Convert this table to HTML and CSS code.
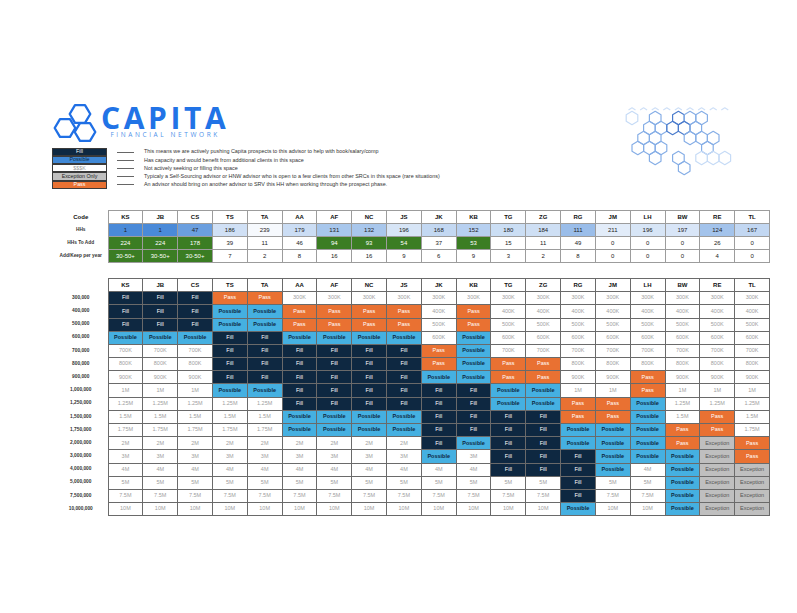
FILE: index.html
```html
<!DOCTYPE html>
<html lang="en">
<head>
<meta charset="utf-8">
<title>Capita Financial Network – Advisor Matrix</title>
<link rel="stylesheet" href="styles.css">
</head>
<body>
<div class="page">
  <div class="top">
    <div class="left">
      <div class="logo">
        <svg class="logo-mark" viewBox="0 0 44 40" aria-hidden="true">
          <g fill="none" stroke="#1f6fe5" stroke-width="2.3" stroke-linejoin="round">
            <polygon points="16.7,11 22,2.1 32,2.1 37.3,11 32,19.9 22,19.9"/>
            <polygon points="1.7,25 7,16.1 17,16.1 22.3,25 17,33.9 7,33.9"/>
            <polygon points="21.7,29 27,20.1 37,20.1 42.3,29 37,37.9 27,37.9"/>
          </g>
        </svg>
        <div class="wordmark">
          <div class="capita">CAPITA</div>
          <div class="fin">FINANCIAL NETWORK</div>
        </div>
      </div>
      <div class="legend">
        <div class="lg-row"><span class="lg-box lg-fill">Fill</span><span class="dash"></span><span class="lg-text">This means we are actively pushing Capita prospects to this advisor to help with book/salary/comp</span></div>
        <div class="lg-row"><span class="lg-box lg-possible">Possible</span><span class="dash"></span><span class="lg-text">Has capacity and would benefit from additional clients in this space</span></div>
        <div class="lg-row"><span class="lg-box lg-k">$$$K</span><span class="dash"></span><span class="lg-text">Not actively seeking or filling this space</span></div>
        <div class="lg-row"><span class="lg-box lg-exc">Exception Only</span><span class="dash"></span><span class="lg-text">Typicaly a Self-Sourcing advisor or HNW advisor who is open to a few clients from other SRCs in this space (rare situations)</span></div>
        <div class="lg-row"><span class="lg-box lg-pass">Pass</span><span class="dash"></span><span class="lg-text">An advisor should bring on another advisor to SRV this HH when working through the prospect phase.</span></div>
      </div>
    </div>
    <svg class="honeycomb" viewBox="0 0 125 80" aria-hidden="true">
      <defs>
        <polygon id="hx" points="0,-6.7 5.8,-3.35 5.8,3.35 0,6.7 -5.8,3.35 -5.8,-3.35"/>
      </defs>
      <g class="peaks">
        <polyline points="12.5,9 16,6.8 19.5,9"/>
        <polyline points="24.1,9 27.6,6.8 31.1,9"/>
        <polyline points="35.7,9 39.2,6.8 42.7,9"/>
        <polyline points="47.3,9 50.8,6.8 54.3,9"/>
        <polyline points="58.9,9 62.4,6.8 65.9,9"/>
        <polyline points="70.5,9 74,6.8 77.5,9"/>
        <polyline points="82.1,9 85.6,6.8 89.1,9"/>
        <polyline points="93.7,9 97.2,6.8 100.7,9"/>
        <polyline points="105.3,9 108.8,6.8 112.3,9"/>
      </g>
      <use href="#hx" x="16" y="17" class="hl"/>
      <use href="#hx" x="39.2" y="17" class="hm"/>
      <use href="#hx" x="62.4" y="17" class="hd"/>
      <use href="#hx" x="74" y="17" class="hm"/>
      <use href="#hx" x="85.6" y="17" class="hm"/>
      <use href="#hx" x="33.4" y="27" class="hm"/>
      <use href="#hx" x="45" y="27" class="hm"/>
      <use href="#hx" x="56.6" y="27" class="hd"/>
      <use href="#hx" x="68.2" y="27" class="hd"/>
      <use href="#hx" x="79.8" y="27" class="hm"/>
      <use href="#hx" x="27.6" y="37" class="hm"/>
      <use href="#hx" x="39.2" y="37" class="hm"/>
      <use href="#hx" x="74" y="37" class="hm"/>
      <use href="#hx" x="85.6" y="37" class="hm"/>
      <use href="#hx" x="97.2" y="37" class="hm"/>
      <use href="#hx" x="21.8" y="47" class="hm"/>
      <use href="#hx" x="33.4" y="47" class="hm"/>
      <use href="#hx" x="45" y="47" class="hm"/>
      <use href="#hx" x="91.4" y="47" class="hm"/>
      <use href="#hx" x="39.2" y="57" class="hm"/>
      <use href="#hx" x="62.4" y="57" class="hm"/>
      <use href="#hx" x="85.6" y="57" class="hl"/>
      <use href="#hx" x="97.2" y="57" class="hl"/>
      <use href="#hx" x="108.8" y="57" class="hl"/>
      <use href="#hx" x="68.2" y="67" class="hm"/>
    </svg>
  </div>

  <table class="sheet summary">
    <colgroup><col class="lab"><col span="19"></colgroup>
    <tr class="head"><th class="lab">Code</th><th>KS</th><th>JB</th><th>CS</th><th>TS</th><th>TA</th><th>AA</th><th>AF</th><th>NC</th><th>JS</th><th>JK</th><th>KB</th><th>TG</th><th>ZG</th><th>RG</th><th>JM</th><th>LH</th><th>BW</th><th>RE</th><th>TL</th></tr>
    <tr><th class="lab">HHs</th>
      <td style="background:#4a8ad8">1</td><td style="background:#4a8ad8">1</td><td style="background:#6b9fdf">47</td><td style="background:#d0e0f5">186</td><td style="background:#f6f9fd">239</td><td style="background:#cbddf4">179</td><td style="background:#a8c7ec">131</td><td style="background:#a9c7ec">132</td><td style="background:#d7e5f6">196</td><td style="background:#c3d8f2">168</td><td style="background:#b7d0f0">152</td><td style="background:#cbdef4">180</td><td style="background:#cedff4">184</td><td style="background:#9abde9">111</td><td style="background:#e2ecf9">211</td><td style="background:#d7e5f6">196</td><td style="background:#d8e5f7">197</td><td style="background:#a3c3eb">124</td><td style="background:#c2d7f2">167</td></tr>
    <tr><th class="lab">HHs To Add</th>
      <td class="g">224</td><td class="g">224</td><td class="g">178</td><td>39</td><td>11</td><td>46</td><td class="g">94</td><td class="g">93</td><td class="g">54</td><td>37</td><td class="g">53</td><td>15</td><td>11</td><td>49</td><td>0</td><td>0</td><td>0</td><td>26</td><td>0</td></tr>
    <tr><th class="lab">Add/Keep per year</th>
      <td class="g">30-50+</td><td class="g">30-50+</td><td class="g">30-50+</td><td>7</td><td>2</td><td>8</td><td>16</td><td>16</td><td>9</td><td>6</td><td>9</td><td>3</td><td>2</td><td>8</td><td>0</td><td>0</td><td>0</td><td>4</td><td>0</td></tr>
  </table>

  <table class="sheet matrix">
    <colgroup><col class="lab"><col span="19"></colgroup>
    <tr class="head"><th class="lab"></th><th>KS</th><th>JB</th><th>CS</th><th>TS</th><th>TA</th><th>AA</th><th>AF</th><th>NC</th><th>JS</th><th>JK</th><th>KB</th><th>TG</th><th>ZG</th><th>RG</th><th>JM</th><th>LH</th><th>BW</th><th>RE</th><th>TL</th></tr>
    <tr><th class="lab">300,000</th><td class="f">Fill</td><td class="f">Fill</td><td class="f">Fill</td><td class="x">Pass</td><td class="x">Pass</td><td>300K</td><td>300K</td><td>300K</td><td>300K</td><td>300K</td><td>300K</td><td>300K</td><td>300K</td><td>300K</td><td>300K</td><td>300K</td><td>300K</td><td>300K</td><td>300K</td></tr>
    <tr><th class="lab">400,000</th><td class="f">Fill</td><td class="f">Fill</td><td class="f">Fill</td><td class="p">Possible</td><td class="p">Possible</td><td class="x">Pass</td><td class="x">Pass</td><td class="x">Pass</td><td class="x">Pass</td><td>400K</td><td class="x">Pass</td><td>400K</td><td>400K</td><td>400K</td><td>400K</td><td>400K</td><td>400K</td><td>400K</td><td>400K</td></tr>
    <tr><th class="lab">500,000</th><td class="f">Fill</td><td class="f">Fill</td><td class="f">Fill</td><td class="p">Possible</td><td class="p">Possible</td><td class="x">Pass</td><td class="x">Pass</td><td class="x">Pass</td><td class="x">Pass</td><td>500K</td><td class="x">Pass</td><td>500K</td><td>500K</td><td>500K</td><td>500K</td><td>500K</td><td>500K</td><td>500K</td><td>500K</td></tr>
    <tr><th class="lab">600,000</th><td class="p">Possible</td><td class="p">Possible</td><td class="p">Possible</td><td class="f">Fill</td><td class="f">Fill</td><td class="p">Possible</td><td class="p">Possible</td><td class="p">Possible</td><td class="p">Possible</td><td>600K</td><td class="p">Possible</td><td>600K</td><td>600K</td><td>600K</td><td>600K</td><td>600K</td><td>600K</td><td>600K</td><td>600K</td></tr>
    <tr><th class="lab">700,000</th><td>700K</td><td>700K</td><td>700K</td><td class="f">Fill</td><td class="f">Fill</td><td class="f">Fill</td><td class="f">Fill</td><td class="f">Fill</td><td class="f">Fill</td><td class="x">Pass</td><td class="p">Possible</td><td>700K</td><td>700K</td><td>700K</td><td>700K</td><td>700K</td><td>700K</td><td>700K</td><td>700K</td></tr>
    <tr><th class="lab">800,000</th><td>800K</td><td>800K</td><td>800K</td><td class="f">Fill</td><td class="f">Fill</td><td class="f">Fill</td><td class="f">Fill</td><td class="f">Fill</td><td class="f">Fill</td><td class="x">Pass</td><td class="p">Possible</td><td class="x">Pass</td><td class="x">Pass</td><td>800K</td><td>800K</td><td>800K</td><td>800K</td><td>800K</td><td>800K</td></tr>
    <tr><th class="lab">900,000</th><td>900K</td><td>900K</td><td>900K</td><td class="f">Fill</td><td class="f">Fill</td><td class="f">Fill</td><td class="f">Fill</td><td class="f">Fill</td><td class="f">Fill</td><td class="p">Possible</td><td class="p">Possible</td><td class="x">Pass</td><td class="x">Pass</td><td>900K</td><td>900K</td><td class="x">Pass</td><td>900K</td><td>900K</td><td>900K</td></tr>
    <tr><th class="lab">1,000,000</th><td>1M</td><td>1M</td><td>1M</td><td class="p">Possible</td><td class="p">Possible</td><td class="f">Fill</td><td class="f">Fill</td><td class="f">Fill</td><td class="f">Fill</td><td class="f">Fill</td><td class="f">Fill</td><td class="p">Possible</td><td class="p">Possible</td><td>1M</td><td>1M</td><td class="x">Pass</td><td>1M</td><td>1M</td><td>1M</td></tr>
    <tr><th class="lab">1,250,000</th><td>1.25M</td><td>1.25M</td><td>1.25M</td><td>1.25M</td><td>1.25M</td><td class="f">Fill</td><td class="f">Fill</td><td class="f">Fill</td><td class="f">Fill</td><td class="f">Fill</td><td class="f">Fill</td><td class="p">Possible</td><td class="p">Possible</td><td class="x">Pass</td><td class="x">Pass</td><td class="p">Possible</td><td>1.25M</td><td>1.25M</td><td>1.25M</td></tr>
    <tr><th class="lab">1,500,000</th><td>1.5M</td><td>1.5M</td><td>1.5M</td><td>1.5M</td><td>1.5M</td><td class="p">Possible</td><td class="p">Possible</td><td class="p">Possible</td><td class="p">Possible</td><td class="f">Fill</td><td class="f">Fill</td><td class="f">Fill</td><td class="f">Fill</td><td class="x">Pass</td><td class="x">Pass</td><td class="p">Possible</td><td>1.5M</td><td class="x">Pass</td><td>1.5M</td></tr>
    <tr><th class="lab">1,750,000</th><td>1.75M</td><td>1.75M</td><td>1.75M</td><td>1.75M</td><td>1.75M</td><td class="p">Possible</td><td class="p">Possible</td><td class="p">Possible</td><td class="p">Possible</td><td class="f">Fill</td><td class="f">Fill</td><td class="f">Fill</td><td class="f">Fill</td><td class="p">Possible</td><td class="p">Possible</td><td class="p">Possible</td><td class="x">Pass</td><td class="x">Pass</td><td>1.75M</td></tr>
    <tr><th class="lab">2,000,000</th><td>2M</td><td>2M</td><td>2M</td><td>2M</td><td>2M</td><td>2M</td><td>2M</td><td>2M</td><td>2M</td><td class="f">Fill</td><td class="p">Possible</td><td class="f">Fill</td><td class="f">Fill</td><td class="p">Possible</td><td class="p">Possible</td><td class="p">Possible</td><td class="x">Pass</td><td class="e">Exception</td><td class="x">Pass</td></tr>
    <tr><th class="lab">3,000,000</th><td>3M</td><td>3M</td><td>3M</td><td>3M</td><td>3M</td><td>3M</td><td>3M</td><td>3M</td><td>3M</td><td class="p">Possible</td><td>3M</td><td class="f">Fill</td><td class="f">Fill</td><td class="f">Fill</td><td class="p">Possible</td><td class="p">Possible</td><td class="p">Possible</td><td class="e">Exception</td><td class="x">Pass</td></tr>
    <tr><th class="lab">4,000,000</th><td>4M</td><td>4M</td><td>4M</td><td>4M</td><td>4M</td><td>4M</td><td>4M</td><td>4M</td><td>4M</td><td>4M</td><td>4M</td><td class="f">Fill</td><td class="f">Fill</td><td class="f">Fill</td><td class="p">Possible</td><td>4M</td><td class="p">Possible</td><td class="e">Exception</td><td class="e">Exception</td></tr>
    <tr><th class="lab">5,000,000</th><td>5M</td><td>5M</td><td>5M</td><td>5M</td><td>5M</td><td>5M</td><td>5M</td><td>5M</td><td>5M</td><td>5M</td><td>5M</td><td>5M</td><td>5M</td><td class="f">Fill</td><td>5M</td><td>5M</td><td class="p">Possible</td><td class="e">Exception</td><td class="e">Exception</td></tr>
    <tr><th class="lab">7,500,000</th><td>7.5M</td><td>7.5M</td><td>7.5M</td><td>7.5M</td><td>7.5M</td><td>7.5M</td><td>7.5M</td><td>7.5M</td><td>7.5M</td><td>7.5M</td><td>7.5M</td><td>7.5M</td><td>7.5M</td><td class="f">Fill</td><td>7.5M</td><td>7.5M</td><td class="p">Possible</td><td class="e">Exception</td><td class="e">Exception</td></tr>
    <tr><th class="lab">10,000,000</th><td>10M</td><td>10M</td><td>10M</td><td>10M</td><td>10M</td><td>10M</td><td>10M</td><td>10M</td><td>10M</td><td>10M</td><td>10M</td><td>10M</td><td>10M</td><td class="p">Possible</td><td>10M</td><td>10M</td><td class="p">Possible</td><td class="e">Exception</td><td class="e">Exception</td></tr>
  </table>
</div>
</body>
</html>
```

FILE: styles.css
```css
* { box-sizing: border-box; }

body {
  margin: 0;
  background: #ffffff;
  font-family: "Liberation Sans", Arial, sans-serif;
  color: #222222;
}

.page {
  padding-top: 103px;
  padding-bottom: 40px;
}

/* ---------- header ---------- */
.top {
  display: flex;
  justify-content: space-between;
  align-items: flex-start;
  padding-right: 56px;
}

.left {
  padding-left: 52px;
}

.logo {
  display: flex;
  align-items: flex-start;
  gap: 4px;
  margin-left: 1px;
}

.logo-mark {
  width: 44px;
  height: 40px;
  display: block;
}

.wordmark {
  display: flex;
  flex-direction: column;
  align-items: center;
  padding-top: 2px;
}

.capita {
  font-family: "Open Sans", "Liberation Sans", sans-serif;
  font-weight: 700;
  font-size: 30px;
  line-height: 26px;
  letter-spacing: 3.6px;
  color: #2173e6;
}

.fin {
  font-family: "Open Sans", "Liberation Sans", sans-serif;
  font-size: 6.5px;
  line-height: 8px;
  letter-spacing: 2.6px;
  color: #5193ea;
}

.honeycomb {
  width: 125px;
  height: 80px;
  display: block;
  margin-top: -2px;
}

.honeycomb use,
.honeycomb polyline {
  fill: none;
  stroke-width: 1.2;
  stroke-linejoin: round;
}

.honeycomb .hd { stroke: #4a7bcc; }
.honeycomb .hm { stroke: #86aee6; }
.honeycomb .hl { stroke: #c6dbf6; }
.honeycomb .peaks polyline { stroke: #cfe0f7; }

/* ---------- legend ---------- */
.legend {
  margin-top: 5px;
  display: flex;
  flex-direction: column;
}

.lg-row {
  display: flex;
  align-items: center;
  height: 8.2px;
}

.lg-box {
  width: 55px;
  height: 100%;
  border: 1px solid #3a3a3a;
  margin-top: -0.5px;
  display: flex;
  align-items: center;
  justify-content: center;
  font-size: 5.3px;
  line-height: 1;
}

.lg-fill { background: #0e2841; color: #ffffff; }
.lg-possible { background: #3f88d6; color: #0e2841; }
.lg-k { background: #ffffff; color: #a0a0a0; }
.lg-exc { background: #c0c0c0; color: #222222; }
.lg-pass { background: #e97132; color: #ffffff; }

.dash {
  width: 17px;
  border-top: 0.8px solid #666666;
  margin: 0 10px;
}

.lg-text {
  font-size: 5.4px;
  line-height: 1;
  color: #333333;
  white-space: nowrap;
}

/* ---------- sheets ---------- */
.sheet {
  border-collapse: collapse;
  table-layout: fixed;
  width: 716px;
  margin-left: 54px;
}

.sheet col.lab { width: 54px; }

.sheet td,
.sheet th {
  padding: 0;
  height: 13px;
  text-align: center;
  vertical-align: middle;
  font-size: 5.5px;
  line-height: 1;
  font-weight: 400;
  white-space: nowrap;
  overflow: hidden;
  color: #a0a0a0;
}

.sheet tr.head th {
  font-size: 6px;
  font-weight: 700;
  color: #111111;
}

.sheet th.lab {
  border: none !important;
  font-size: 4.8px;
  font-weight: 700;
  color: #333333;
  background: transparent;
}

.summary {
  margin-top: 21px;
}

.summary td,
.summary th {
  border: 1px solid #9c9c9c;
  color: #222222;
  font-size: 6px;
}

.matrix {
  margin-top: 15px;
}

.matrix td,
.matrix th {
  height: 13.2px;
  border: 1px solid #6a6a6a;
}

.g { background: #3b7d23; color: #ffffff !important; }

.f { background: #0e2841; color: #ffffff !important; }
.p { background: #45b0e1; color: #0e2841 !important; font-weight: 700 !important; }
.x { background: #e97132; color: #ffffff !important; }
.e { background: #bfbfbf; color: #555555 !important; }
```
